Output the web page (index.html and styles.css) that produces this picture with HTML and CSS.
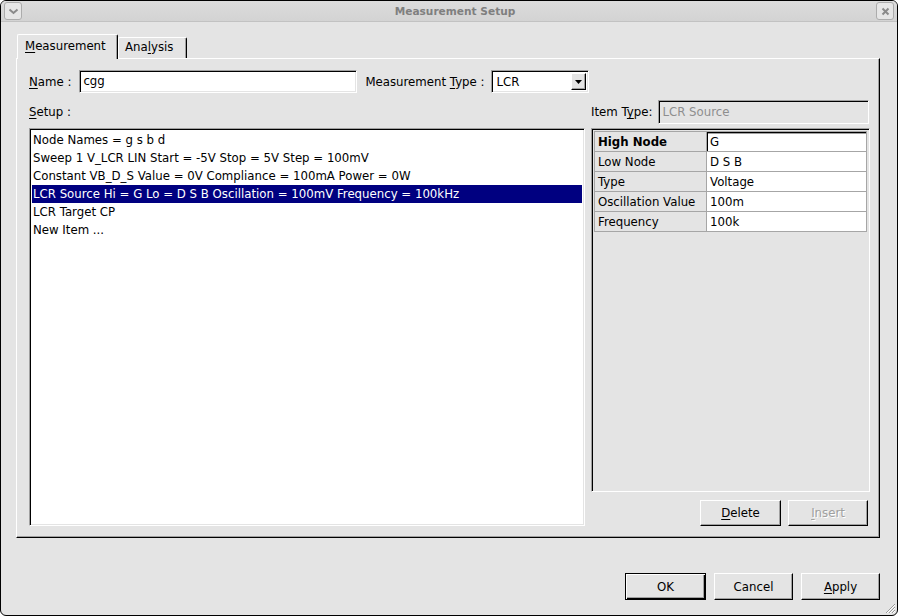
FILE: index.html
```html
<!DOCTYPE html>
<html lang="en">

<head>
	<meta charset="UTF-8" />
	<title>Measurement Setup</title>
	<link rel="stylesheet" href="styles.css">
</head>

<body>
	<div class="window">
		<div class="titlebar">
			<span class="title-btn">
				<svg width="11" height="7" viewBox="0 0 11 7"><path d="M1.5 1.5 L5.5 5 L9.5 1.5" fill="none" stroke="#8a8a8a" stroke-width="2" /></svg>
			</span>
			<span class="title_text">Measurement Setup</span>
			<span class="title-btn">
				<svg width="9" height="9" viewBox="0 0 9 9"><path d="M1.5 1.5 L7.5 7.5 M7.5 1.5 L1.5 7.5" fill="none" stroke="#8a8a8a" stroke-width="2" /></svg>
			</span>
		</div>

		<div class="dialog-body">
			<div class="tabs">
				<div class="tab active"><u>M</u>easurement</div>
				<div class="tab">Ana<u>l</u>ysis</div>
			</div>

			<div class="tab-panel">
				<div class="top-row">
					<label class="lbl"><u>N</u>ame :</label>
					<div class="field name-field">cgg</div>
					<label class="lbl type-lbl">Measurement <u>T</u>ype :</label>
					<div class="field combo">
						<span>LCR</span>
						<span class="combo-arrow">
							<svg width="7" height="4" viewBox="0 0 7 4"><path d="M0 0 H7 L3.5 4 Z" fill="#000" /></svg>
						</span>
					</div>
				</div>

				<div class="setup-grid">
					<label class="lbl setup-lbl"><u>S</u>etup :</label>
					<div class="item-type">
						<label class="lbl">Item T<u>y</u>pe:</label>
						<div class="field disabled">LCR Source</div>
					</div>

					<div class="field list">
						<div class="list-item">Node Names = g s b d</div>
						<div class="list-item">Sweep 1 V_LCR LIN Start = -5V Stop = 5V Step = 100mV</div>
						<div class="list-item">Constant VB_D_S Value = 0V Compliance = 100mA Power = 0W</div>
						<div class="list-item selected">LCR Source Hi = G Lo = D S B Oscillation = 100mV Frequency = 100kHz</div>
						<div class="list-item">LCR Target CP</div>
						<div class="list-item">New Item ...</div>
					</div>

					<div class="props">
						<div class="field prop-frame">
							<table class="prop-table">
								<tr><td class="key bold">High Node</td><td class="val focus">G</td></tr>
								<tr><td class="key">Low Node</td><td class="val">D S B</td></tr>
								<tr><td class="key">Type</td><td class="val">Voltage</td></tr>
								<tr><td class="key">Oscillation Value</td><td class="val">100m</td></tr>
								<tr><td class="key">Frequency</td><td class="val">100k</td></tr>
							</table>
						</div>
						<div class="prop-buttons">
							<button class="btn delete-btn"><u>D</u>elete</button>
							<button class="btn insert-btn" disabled><u>I</u>nsert</button>
						</div>
					</div>
				</div>
			</div>

			<div class="footer">
				<button class="btn ok-btn">OK</button>
				<button class="btn">Cancel</button>
				<button class="btn"><u>A</u>pply</button>
			</div>
		</div>

		<svg class="grip" width="12" height="12" viewBox="0 0 12 12">
			<path d="M11 2 L2 11 M11 5 L5 11 M11 8 L8 11" stroke="#9a9a9a" stroke-width="1" />
			<path d="M11 3 L3 11 M11 6 L6 11 M11 9 L9 11" stroke="#fff" stroke-width="1" />
		</svg>
	</div>
</body>

</html>
```

FILE: styles.css
```css
html,
body {
	margin: 0;
	padding: 0;
	background: #fff;
}

body {
	font-family: "DejaVu Sans", Verdana, sans-serif;
	font-size: 11.75px;
	color: #000;
}

u {
	text-decoration: underline;
	text-underline-offset: 2px;
}

.window {
	position: relative;
	width: 898px;
	height: 616px;
	box-sizing: border-box;
	border: 1px solid #000;
	border-radius: 6px;
	background: #e4e4e4;
	overflow: hidden;
	display: flex;
	flex-direction: column;
}

.titlebar {
	height: 20px;
	display: flex;
	align-items: center;
	padding: 0 3px;
	background: linear-gradient(#dcdcdc, #d3d3d3);
	border-bottom: 1px solid #c2c2c2;
}

.title_text {
	flex: 1;
	text-align: center;
	padding-left: 12px;
	font-size: 10.6px;
	font-weight: bold;
	color: #7f7f7f;
}

.title-btn {
	width: 16px;
	height: 16px;
	border: 1px solid #acacac;
	border-radius: 3px;
	background: #e6e6e6;
	display: flex;
	align-items: center;
	justify-content: center;
}

.dialog-body {
	flex: 1;
	padding: 12px 17px 0 15px;
	display: flex;
	flex-direction: column;
}

.tabs {
	display: flex;
	align-items: flex-end;
	height: 24px;
	padding-left: 1px;
}

.tab {
	box-sizing: border-box;
	height: 21px;
	padding: 2px 0 0 6px;
	width: 69px;
	border-top: 1px solid #fff;
	border-left: 1px solid #fff;
	border-right: 1px solid #000;
	border-radius: 2px 2px 0 0;
	box-shadow: inset -1px 0 #a0a0a0;
}

.tab.active {
	position: relative;
	z-index: 1;
	height: 25px;
	width: 101px;
	padding: 4px 0 0 7px;
	margin-bottom: -1px;
	background: #e4e4e4;
}

.tab-panel {
	box-sizing: border-box;
	height: 480px;
	border: 1px solid;
	border-color: #fff #000 #000 #fff;
	box-shadow: inset -1px -1px #a0a0a0;
	padding: 12px 9px 11px 12px;
	display: flex;
	flex-direction: column;
}

.lbl {
	white-space: nowrap;
}

.field {
	box-sizing: border-box;
	background: #fff;
	border: 1px solid;
	border-color: #a0a0a0 #fff #fff #a0a0a0;
	box-shadow: inset 1px 1px #000, inset -1px -1px #e4e4e4;
}

.top-row {
	display: flex;
	align-items: center;
	height: 23px;
	margin-top: -1px;
}

.name-field {
	margin-left: 8px;
	width: 278px;
	height: 23px;
	padding: 3px 3px;
}

.type-lbl {
	margin-left: 8px;
}

.combo {
	margin-left: 7px;
	width: 98px;
	height: 23px;
	display: flex;
	align-items: center;
	justify-content: space-between;
	padding: 0 2px 0 4px;
}

.combo-arrow {
	width: 15px;
	height: 17px;
	box-sizing: border-box;
	border: 1px solid;
	border-color: #fff #000 #000 #fff;
	box-shadow: inset -1px -1px #a0a0a0;
	background: #e4e4e4;
	display: flex;
	align-items: center;
	justify-content: center;
}

.setup-grid {
	flex: 1;
	margin-top: 7px;
	display: grid;
	grid-template-columns: 556px 279px;
	grid-template-rows: 24px 1fr;
	column-gap: 6px;
	row-gap: 4px;
}

.setup-lbl {
	align-self: end;
	padding-bottom: 5px;
}

.item-type {
	display: flex;
	align-items: center;
	gap: 6px;
}

.item-type .field {
	flex: 1;
	height: 24px;
	margin-right: 1px;
	padding: 4px 3px;
	background: #e4e4e4;
	color: #8e8e8e;
}

.list {
	padding: 2px 2px;
}

.list-item {
	height: 18px;
	line-height: 18px;
	padding-left: 1px;
	white-space: nowrap;
}

.list-item.selected {
	background: #000080;
	color: #fff;
}

.props {
	display: flex;
	flex-direction: column;
}

.prop-frame {
	flex: 1;
	background: #e4e4e4;
	padding: 2px 1px;
}

.prop-table {
	border-collapse: collapse;
	margin-left: 1px;
}

.prop-table td {
	height: 19px;
	padding: 0 3px;
	border: 1px solid #a6a6a6;
	white-space: nowrap;
}

.key {
	width: 105px;
	background: #e4e4e4;
}

.key.bold {
	font-weight: bold;
}

.val {
	width: 153px;
	background: #fff;
	padding-left: 2px;
}

.val.focus {
	box-shadow: inset 0 1px #000, inset 1px 0 #000, inset 0 2px #a0a0a0;
}

.prop-buttons {
	display: flex;
	justify-content: flex-end;
	gap: 7px;
	margin-top: 8px;
	padding-right: 2px;
}

.btn {
	box-sizing: border-box;
	height: 26px;
	width: 79px;
	font-family: inherit;
	font-size: 11.75px;
	color: #000;
	background: #e4e4e4;
	border: 1px solid;
	border-color: #fff #000 #000 #fff;
	box-shadow: inset -1px -1px #a0a0a0;
	padding: 0;
	border-radius: 0;
}

.delete-btn {
	width: 81px;
}

.insert-btn {
	width: 80px;
}

.btn:disabled {
	color: #a0a0a0;
	text-shadow: 1px 1px #fff;
}

.footer {
	margin-top: 35px;
	display: flex;
	justify-content: flex-end;
	gap: 8px;
}

.footer .btn {
	height: 27px;
}

.ok-btn {
	width: 81px !important;
	border: 1px solid #000;
	box-shadow: inset 1px 1px #fff, inset -1px -1px #000, inset -2px -2px #a0a0a0;
}

.grip {
	position: absolute;
	right: 1px;
	bottom: 1px;
}
```
